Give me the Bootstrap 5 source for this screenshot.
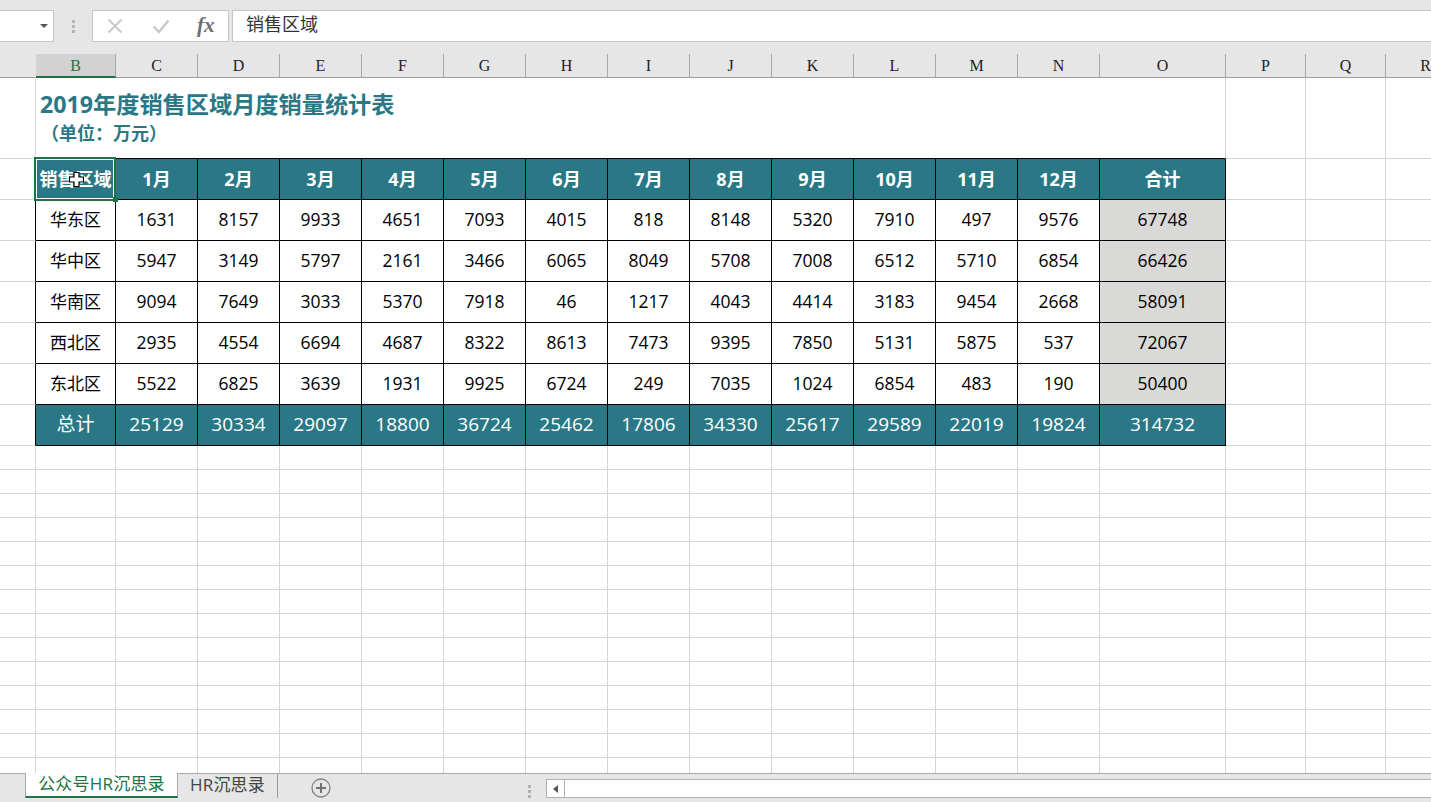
<!DOCTYPE html>
<html lang="zh">
<head>
<meta charset="utf-8">
<title>2019年度销售区域月度销量统计表</title>
<link href="https://cdn.jsdelivr.net/npm/bootstrap@5.3.0/dist/css/bootstrap.min.css" rel="stylesheet">
<style>
html,body{height:100%;margin:0;overflow:hidden;background:#fff;}
body{font-family:"Open Sans","Noto Sans CJK SC",sans-serif;color:#000;}
.app-frame{height:802px;width:1431px;}
.top-strip{height:54px;background:#e6e6e6;padding-top:10px;flex:none;}
.name-box{width:54px;height:32px;background:#fff;border:1px solid #c6c6c6;border-left:0;}
.caret-down{width:0;height:0;border-left:4px solid transparent;border-right:4px solid transparent;border-top:4px solid #555;margin-right:5px;}
.grip{width:38px;height:32px;}
.grip span{display:block;width:3px;height:3px;background:#b4b4b4;margin:1px 0;}
.fx-tools{width:137px;height:32px;background:#fff;border:1px solid #c6c6c6;margin-right:3px;}
.fx-tools svg{display:block;}
.btn-x{margin-left:14px;}
.btn-ok{margin-left:29px;}
.fx-label{font:italic 700 21px "Liberation Serif",serif;color:#6f6f6f;line-height:1;margin-left:27px;margin-top:-2px;}
.fx-input{height:32px;background:#fff;border:1px solid #c6c6c6;border-right:0;padding-left:13px;font-size:18px;color:#333;line-height:27px;}
.sheet-area{height:719px;flex:none;}
.grid-sheet{border-collapse:separate;border-spacing:0;table-layout:fixed;width:1466px;}
.grid-sheet td,.grid-sheet th{padding:0;text-align:center;vertical-align:middle;border-right:1px solid #d4d4d4;border-bottom:1px solid #d4d4d4;white-space:nowrap;}
.col-heads th{height:24px;background:#e6e6e6;font:400 16px/1 "Liberation Serif",serif;color:#222;border-right:1px solid #a8a8a8;border-bottom:1px solid #a0a0a0;padding-top:1px;}
.col-heads th.corner{border-right-color:#e6e6e6;}
.col-heads th.sel-col{background:#d2d2d2;color:#217346;border-bottom:2px solid #217346;}
.title-cell{height:81px;text-align:left!important;vertical-align:top!important;padding:10px 0 0 4px!important;color:#2a7886;font-weight:700;border-bottom-color:#000!important;overflow:visible;}
.title-main{font-size:23.2px;line-height:32px;}
.title-sub{font-size:18px;line-height:25px;margin-top:1px;margin-left:1px;}
.r-41 td{height:41px;font-size:17.5px;line-height:1;padding-bottom:1px;}
.r-41 td:nth-child(2):not(.xl-top):not(.xl-foot){font-size:17px;}
.r-24 td{height:24px;}
.xl-box{border-right:1px solid #000!important;border-bottom:1px solid #000!important;}
.grid-sheet td.xl-edge{border-right-color:#000;}
.grid-sheet td.xl-top{background:#2a7886;color:#fff;font-weight:700;font-size:18px;}
.grid-sheet td.xl-foot{background:#2a7886;color:#fff;font-size:19px;}
.xl-grey{background:#d9d9d7;}
.sel-frame{position:absolute;left:34px;top:103px;width:82px;height:44px;border:2px solid #217346;box-shadow:inset 0 0 0 1px #fff;pointer-events:none;}
.sel-handle{position:absolute;left:113px;top:143px;width:5px;height:5px;background:#217346;}
.xl-cursor{position:absolute;left:69px;top:118px;}
.tab-strip{height:29px;background:#e6e6e6;border-top:1px solid #a8a8a8;flex:none;font-size:17px;color:#444;}
.tab-on{margin-left:25px;width:153px;height:25px;background:#fff;border-left:1px solid #a8a8a8;border-right:1px solid #a8a8a8;border-bottom:2px solid #217346;margin-top:-1px;color:#217346;text-align:center;line-height:22px;letter-spacing:.2px;}
.tab-off{width:100px;height:24px;line-height:21px;text-align:center;border-right:1px solid #9a9a9a;letter-spacing:.2px;}
.tab-add{margin-left:33px;margin-top:4px;}
.tab-grip{margin-left:197px;margin-top:9px;}
.tab-grip span{display:block;width:3px;height:3px;background:#b0b0b0;margin:2px 0;}
.h-scroll{margin-left:15px;margin-top:5px;height:19px;flex:1;background:#fff;border:1px solid #b0b0b0;border-right:0;}
.h-left{width:18px;border-right:1px solid #b0b0b0;}
.arrow-left{width:0;height:0;border-top:4px solid transparent;border-bottom:4px solid transparent;border-right:5px solid #555;}
</style>
</head>
<body>
<div class="app-frame d-flex flex-column">
  <div class="top-strip d-flex align-items-start">
    <div class="name-box d-flex align-items-center justify-content-end"><span class="caret-down"></span></div>
    <div class="grip d-flex flex-column align-items-center justify-content-center"><span></span><span></span><span></span></div>
    <div class="fx-tools d-flex align-items-center">
      <svg class="btn-x" width="16" height="16" viewBox="0 0 16 16"><path d="M1.5 1.5 14.5 14.5M14.5 1.5 1.5 14.5" stroke="#c8c8c8" stroke-width="2" fill="none"/></svg>
      <svg class="btn-ok" width="18" height="16" viewBox="0 0 18 16"><path d="M1.5 8.5 7 14 16.5 2.5" stroke="#c8c8c8" stroke-width="2.4" fill="none"/></svg>
      <span class="fx-label">fx</span>
    </div>
    <div class="fx-input flex-grow-1">销售区域</div>
  </div>
  <div class="sheet-area position-relative overflow-hidden bg-white">
    <table class="grid-sheet">
      <colgroup><col style="width:36px"><col style="width:80px"><col span="12" style="width:82px"><col style="width:126px"><col span="3" style="width:80px"></colgroup>
      <thead><tr class="col-heads"><th class="corner"></th><th class="sel-col">B</th><th>C</th><th>D</th><th>E</th><th>F</th><th>G</th><th>H</th><th>I</th><th>J</th><th>K</th><th>L</th><th>M</th><th>N</th><th>O</th><th>P</th><th>Q</th><th>R</th></tr></thead>
      <tbody>
        <tr><td></td><td class="title-cell" colspan="14"><div class="title-main">2019年度销售区域月度销量统计表</div><div class="title-sub">（单位：万元）</div></td><td></td><td></td><td></td></tr>
        <tr class="r-41"><td class="xl-edge"></td><td class="xl-box xl-top">销售区域</td><td class="xl-box xl-top">1月</td><td class="xl-box xl-top">2月</td><td class="xl-box xl-top">3月</td><td class="xl-box xl-top">4月</td><td class="xl-box xl-top">5月</td><td class="xl-box xl-top">6月</td><td class="xl-box xl-top">7月</td><td class="xl-box xl-top">8月</td><td class="xl-box xl-top">9月</td><td class="xl-box xl-top">10月</td><td class="xl-box xl-top">11月</td><td class="xl-box xl-top">12月</td><td class="xl-box xl-top">合计</td><td></td><td></td><td></td></tr>
        <tr class="r-41"><td class="xl-edge"></td><td class="xl-box">华东区</td><td class="xl-box">1631</td><td class="xl-box">8157</td><td class="xl-box">9933</td><td class="xl-box">4651</td><td class="xl-box">7093</td><td class="xl-box">4015</td><td class="xl-box">818</td><td class="xl-box">8148</td><td class="xl-box">5320</td><td class="xl-box">7910</td><td class="xl-box">497</td><td class="xl-box">9576</td><td class="xl-box xl-grey">67748</td><td></td><td></td><td></td></tr>
        <tr class="r-41"><td class="xl-edge"></td><td class="xl-box">华中区</td><td class="xl-box">5947</td><td class="xl-box">3149</td><td class="xl-box">5797</td><td class="xl-box">2161</td><td class="xl-box">3466</td><td class="xl-box">6065</td><td class="xl-box">8049</td><td class="xl-box">5708</td><td class="xl-box">7008</td><td class="xl-box">6512</td><td class="xl-box">5710</td><td class="xl-box">6854</td><td class="xl-box xl-grey">66426</td><td></td><td></td><td></td></tr>
        <tr class="r-41"><td class="xl-edge"></td><td class="xl-box">华南区</td><td class="xl-box">9094</td><td class="xl-box">7649</td><td class="xl-box">3033</td><td class="xl-box">5370</td><td class="xl-box">7918</td><td class="xl-box">46</td><td class="xl-box">1217</td><td class="xl-box">4043</td><td class="xl-box">4414</td><td class="xl-box">3183</td><td class="xl-box">9454</td><td class="xl-box">2668</td><td class="xl-box xl-grey">58091</td><td></td><td></td><td></td></tr>
        <tr class="r-41"><td class="xl-edge"></td><td class="xl-box">西北区</td><td class="xl-box">2935</td><td class="xl-box">4554</td><td class="xl-box">6694</td><td class="xl-box">4687</td><td class="xl-box">8322</td><td class="xl-box">8613</td><td class="xl-box">7473</td><td class="xl-box">9395</td><td class="xl-box">7850</td><td class="xl-box">5131</td><td class="xl-box">5875</td><td class="xl-box">537</td><td class="xl-box xl-grey">72067</td><td></td><td></td><td></td></tr>
        <tr class="r-41"><td class="xl-edge"></td><td class="xl-box">东北区</td><td class="xl-box">5522</td><td class="xl-box">6825</td><td class="xl-box">3639</td><td class="xl-box">1931</td><td class="xl-box">9925</td><td class="xl-box">6724</td><td class="xl-box">249</td><td class="xl-box">7035</td><td class="xl-box">1024</td><td class="xl-box">6854</td><td class="xl-box">483</td><td class="xl-box">190</td><td class="xl-box xl-grey">50400</td><td></td><td></td><td></td></tr>
        <tr class="r-41"><td class="xl-edge"></td><td class="xl-box xl-foot">总计</td><td class="xl-box xl-foot">25129</td><td class="xl-box xl-foot">30334</td><td class="xl-box xl-foot">29097</td><td class="xl-box xl-foot">18800</td><td class="xl-box xl-foot">36724</td><td class="xl-box xl-foot">25462</td><td class="xl-box xl-foot">17806</td><td class="xl-box xl-foot">34330</td><td class="xl-box xl-foot">25617</td><td class="xl-box xl-foot">29589</td><td class="xl-box xl-foot">22019</td><td class="xl-box xl-foot">19824</td><td class="xl-box xl-foot">314732</td><td></td><td></td><td></td></tr>
        <tr class="r-24"><td></td><td></td><td></td><td></td><td></td><td></td><td></td><td></td><td></td><td></td><td></td><td></td><td></td><td></td><td></td><td></td><td></td><td></td></tr>
        <tr class="r-24"><td></td><td></td><td></td><td></td><td></td><td></td><td></td><td></td><td></td><td></td><td></td><td></td><td></td><td></td><td></td><td></td><td></td><td></td></tr>
        <tr class="r-24"><td></td><td></td><td></td><td></td><td></td><td></td><td></td><td></td><td></td><td></td><td></td><td></td><td></td><td></td><td></td><td></td><td></td><td></td></tr>
        <tr class="r-24"><td></td><td></td><td></td><td></td><td></td><td></td><td></td><td></td><td></td><td></td><td></td><td></td><td></td><td></td><td></td><td></td><td></td><td></td></tr>
        <tr class="r-24"><td></td><td></td><td></td><td></td><td></td><td></td><td></td><td></td><td></td><td></td><td></td><td></td><td></td><td></td><td></td><td></td><td></td><td></td></tr>
        <tr class="r-24"><td></td><td></td><td></td><td></td><td></td><td></td><td></td><td></td><td></td><td></td><td></td><td></td><td></td><td></td><td></td><td></td><td></td><td></td></tr>
        <tr class="r-24"><td></td><td></td><td></td><td></td><td></td><td></td><td></td><td></td><td></td><td></td><td></td><td></td><td></td><td></td><td></td><td></td><td></td><td></td></tr>
        <tr class="r-24"><td></td><td></td><td></td><td></td><td></td><td></td><td></td><td></td><td></td><td></td><td></td><td></td><td></td><td></td><td></td><td></td><td></td><td></td></tr>
        <tr class="r-24"><td></td><td></td><td></td><td></td><td></td><td></td><td></td><td></td><td></td><td></td><td></td><td></td><td></td><td></td><td></td><td></td><td></td><td></td></tr>
        <tr class="r-24"><td></td><td></td><td></td><td></td><td></td><td></td><td></td><td></td><td></td><td></td><td></td><td></td><td></td><td></td><td></td><td></td><td></td><td></td></tr>
        <tr class="r-24"><td></td><td></td><td></td><td></td><td></td><td></td><td></td><td></td><td></td><td></td><td></td><td></td><td></td><td></td><td></td><td></td><td></td><td></td></tr>
        <tr class="r-24"><td></td><td></td><td></td><td></td><td></td><td></td><td></td><td></td><td></td><td></td><td></td><td></td><td></td><td></td><td></td><td></td><td></td><td></td></tr>
        <tr class="r-24"><td></td><td></td><td></td><td></td><td></td><td></td><td></td><td></td><td></td><td></td><td></td><td></td><td></td><td></td><td></td><td></td><td></td><td></td></tr>
        <tr class="r-24"><td></td><td></td><td></td><td></td><td></td><td></td><td></td><td></td><td></td><td></td><td></td><td></td><td></td><td></td><td></td><td></td><td></td><td></td></tr>
      </tbody>
    </table>
    <div class="sel-frame"></div>
    <div class="sel-handle"></div>
    <svg class="xl-cursor" width="15" height="15" viewBox="0 0 15 15"><path d="M5 .5H10V5H14.5V10H10V14.5H5V10H.5V5H5Z" fill="#fff" stroke="#000" stroke-width="1.2"/></svg>
  </div>
  <div class="tab-strip d-flex align-items-start">
    <div class="tab-on">公众号HR沉思录</div>
    <div class="tab-off">HR沉思录</div>
    <svg class="tab-add" width="20" height="20" viewBox="0 0 20 20"><circle cx="10" cy="10" r="9" fill="none" stroke="#808080" stroke-width="1.3"/><path d="M10 5V15M5 10H15" stroke="#707070" stroke-width="2"/></svg>
    <div class="tab-grip"><span></span><span></span><span></span></div>
    <div class="h-scroll d-flex"><div class="h-left d-flex align-items-center justify-content-center"><span class="arrow-left"></span></div></div>
  </div>
</div>
</body>
</html>
